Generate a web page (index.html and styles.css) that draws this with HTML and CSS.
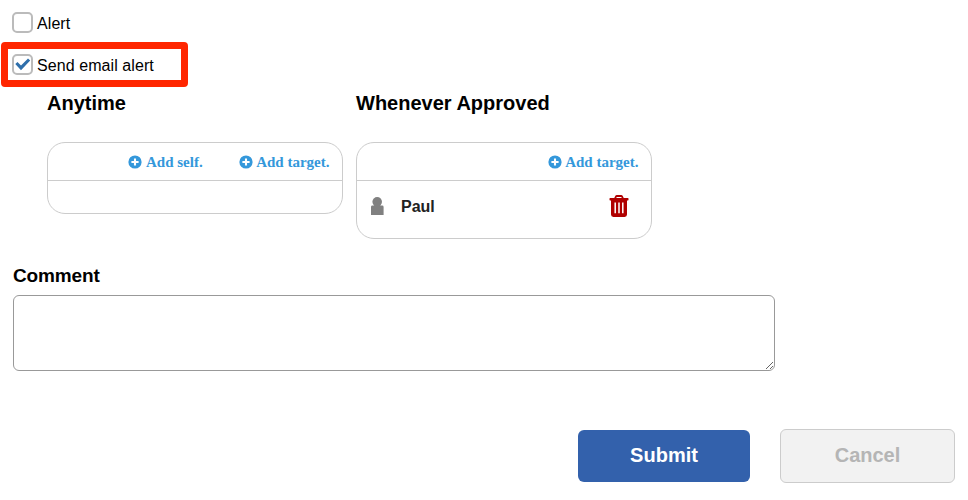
FILE: index.html
```html
<!DOCTYPE html>
<html lang="en">
<head>
<meta charset="UTF-8" />
<meta name="viewport" content="width=device-width, initial-scale=1" />
<title>Alert settings</title>
<link rel="stylesheet" href="styles.css">
</head>

<body>
  <svg width="0" height="0" class="sprite">
    <symbol id="icon-plus" viewBox="0 0 14 14">
      <circle cx="7" cy="7" r="6.6" fill="currentColor" />
      <path d="M7 3.4v7.2M3.4 7h7.2" stroke="#fff" stroke-width="2.1" />
    </symbol>
  </svg>

  <form class="alert-form">
    <label class="check-row">
      <input type="checkbox" class="check">
      <span>Alert</span>
    </label>
    <label class="check-row highlight">
      <input type="checkbox" class="check" checked>
      <span>Send email alert</span>
    </label>

    <div class="targets">
      <section class="target-group">
        <h2>Anytime</h2>
        <div class="target-box">
          <div class="target-actions">
            <a class="add-link"><svg class="plus"><use href="#icon-plus" /></svg><span>Add self.</span></a>
            <a class="add-link"><svg class="plus"><use href="#icon-plus" /></svg><span>Add target.</span></a>
          </div>
          <div class="target-list empty"></div>
        </div>
      </section>

      <section class="target-group">
        <h2>Whenever Approved</h2>
        <div class="target-box">
          <div class="target-actions">
            <a class="add-link"><svg class="plus"><use href="#icon-plus" /></svg><span>Add target.</span></a>
          </div>
          <div class="target-list">
            <svg class="user-icon" viewBox="0 0 14 18">
              <circle cx="7.2" cy="4.8" r="4.8" fill="#808080" />
              <path d="M1 10Q1 8.6 2.4 8.6h9.8q1.4 0 1.4 1.4V18H1z" fill="#808080" />
            </svg>
            <span class="user-name">Paul</span>
            <svg class="trash" viewBox="0 0 20 22">
              <path d="M6 3.6L6.9 1.6Q7.2 1 7.9 1h4.2q.7 0 1 .6L14 3.6" fill="none" stroke="#b00000" stroke-width="1.8" />
              <path d="M1.1 3h17.8q.6 0 .6.6v1.2q0 .6-.6.6H18V19.6Q18 22 15.6 22H4.4Q2 22 2 19.6V5.4H1.1q-.6 0-.6-.6V3.6q0-.6.6-.6z" fill="#b00000" />
              <path d="M6.2 7.4v10.8M10 7.4v10.8M13.8 7.4v10.8" stroke="#fff" stroke-width="1.5" />
            </svg>
          </div>
        </div>
      </section>
    </div>

    <label class="comment-label" for="comment">Comment</label>
    <textarea id="comment" class="comment"></textarea>

    <div class="buttons">
      <button type="button" class="btn submit">Submit</button>
      <button type="button" class="btn cancel">Cancel</button>
    </div>
  </form>
</body>
</html>
```

FILE: styles.css
```css
* {
  box-sizing: border-box;
}
body {
  font-family: "Liberation Sans", Arial, sans-serif;
  background: #fff;
  margin: 0;
  color: #000;
}
.sprite {
  display: none;
}
.alert-form {
  width: 968px;
  height: 500px;
  padding-top: 1px;
}

/* Checkboxes */
.check-row {
  display: flex;
  align-items: center;
  gap: 4px;
  width: 187px;
  height: 41px;
  margin-left: 1px;
  padding: 2px 0 0 11px;
  font-size: 16px;
  line-height: 20px;
}
.check-row span {
  padding-top: 2px;
  letter-spacing: 0.08px;
}
.check-row.highlight {
  height: 45px;
  padding: 0 0 0 4px;
  border: 7px solid #ff2600;
  border-radius: 4px;
}
.check {
  appearance: none;
  flex: none;
  width: 21px;
  height: 21px;
  margin: 0;
  border: 2px solid #bbb;
  border-radius: 5px;
  background: #fff;
}
.check:checked::before {
  content: "";
  display: block;
  width: 17px;
  height: 17px;
  background: #2f6fab;
  clip-path: polygon(1.3px 8px, 3.5px 6px, 7px 9.6px, 14px 2.6px, 16.2px 4.6px, 7px 14.2px);
}

/* Targets */
.targets {
  display: flex;
  align-items: flex-start;
  gap: 13px;
  height: 177px;
  padding: 4px 0 0 47px;
}
.target-group {
  width: 296px;
}
.target-group h2 {
  margin: 0 0 27px;
  font-size: 20px;
  line-height: 24px;
}
.target-box {
  border: 1px solid #ccc;
  border-radius: 18px;
}
.target-actions {
  display: flex;
  justify-content: flex-end;
  align-items: center;
  gap: 36px;
  height: 38px;
  padding-right: 12.5px;
  border-bottom: 1px solid #ccc;
}
.add-link {
  display: flex;
  align-items: center;
  gap: 3.5px;
  font-family: "Liberation Serif", "Times New Roman", serif;
  font-size: 15px;
  font-weight: bold;
  line-height: 18px;
  color: #3498db;
}
.plus {
  width: 14px;
  height: 14px;
}
.target-list {
  display: flex;
  align-items: center;
  height: 57px;
  padding: 0 22.5px 6px 13px;
}
.target-list.empty {
  height: 32px;
}
.user-icon {
  width: 14px;
  height: 18px;
  margin-bottom: 1px;
}
.user-name {
  flex: 1;
  margin-left: 17px;
  font-size: 16px;
  font-weight: bold;
  color: #222;
}
.trash {
  width: 20px;
  height: 22px;
  margin-bottom: 2px;
}

/* Comment */
.comment-label {
  display: block;
  margin-left: 13px;
  font-size: 19px;
  font-weight: bold;
  line-height: 24px;
  letter-spacing: -0.15px;
}
.comment {
  display: block;
  width: 762px;
  height: 76px;
  margin: 7px 0 0 13px;
  border: 1px solid #999;
  border-radius: 6px;
  resize: both;
}

/* Buttons */
.buttons {
  display: flex;
  justify-content: flex-end;
  align-items: center;
  gap: 30px;
  margin: 58px 13px 0 0;
}
.btn {
  padding: 0 0 2px;
  border-radius: 6px;
  font-family: inherit;
  font-size: 20px;
  font-weight: bold;
}
.btn.submit {
  width: 172px;
  height: 52px;
  border: none;
  background: #3361ac;
  color: #fff;
}
.btn.cancel {
  width: 175px;
  height: 54px;
  border: 1px solid #ccc;
  background: #f2f2f2;
  color: #b5b5b5;
}
```
